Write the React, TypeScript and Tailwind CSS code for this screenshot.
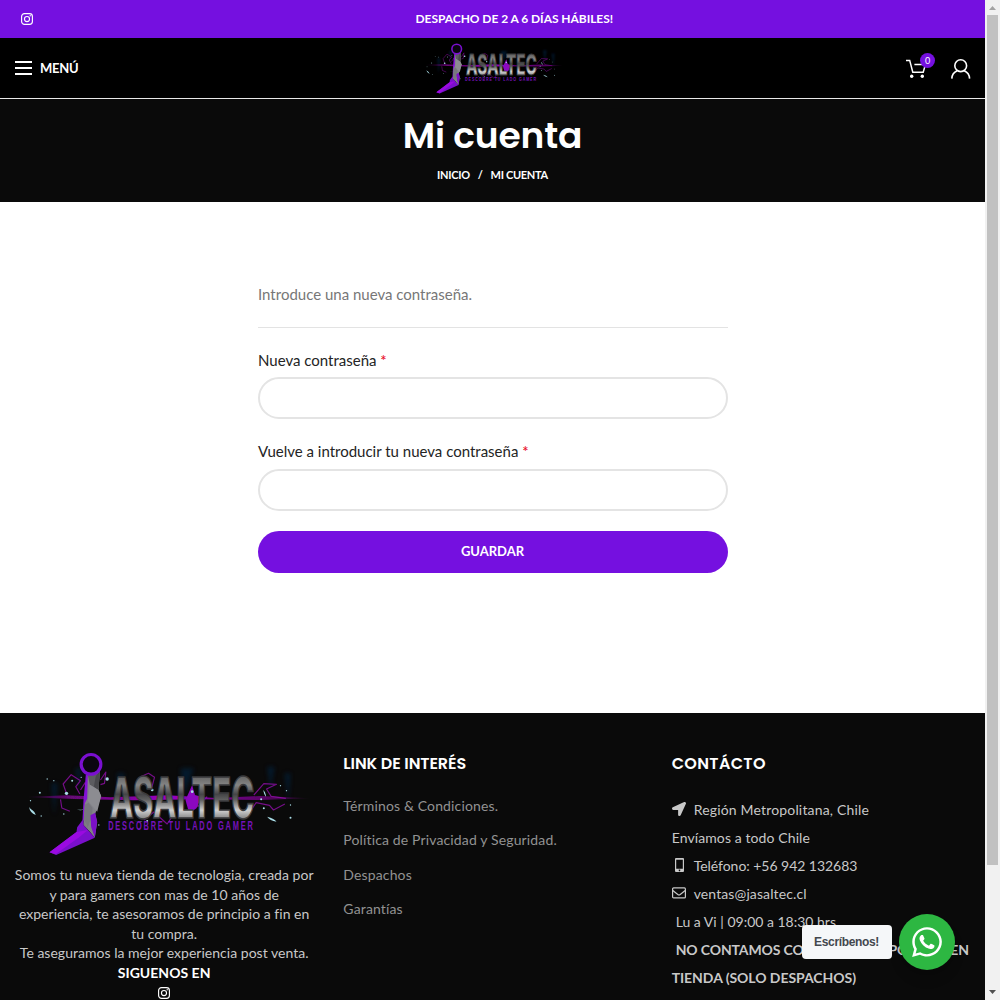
import React from 'react';
import { FaWhatsapp, FaLocationArrow } from 'react-icons/fa';

const SPARKS: [number, number, number][] = [
  [198, 160, 5], [320, 117, 5], [140, 117, 2], [118, 158, 3], [160, 122, 2], [215, 122, 3], [90, 182, 2],
  [122, 228, 2], [190, 222, 2], [295, 255, 2], [870, 233, 3], [858, 152, 2], [870, 195, 2], [790, 205, 3],
  [840, 137, 2], [455, 150, 4], [440, 243, 3], [575, 155, 4], [782, 178, 3], [242, 112, 2],
];

function Logo({ id, className }: { id: string; className: string }) {
  return (
    <svg viewBox="43.5 36 894 312" className={className} aria-label="Jasaltec">
      <defs>
        <linearGradient id={id + 'l'} gradientUnits="userSpaceOnUse" x1="0" y1="-124" x2="0" y2="2">
          <stop offset="0" stopColor="#666" />
          <stop offset="0.2" stopColor="#858585" />
          <stop offset="0.42" stopColor="#454547" />
          <stop offset="0.55" stopColor="#606060" />
          <stop offset="0.8" stopColor="#d0d0d0" />
          <stop offset="1" stopColor="#858585" />
        </linearGradient>
        <linearGradient id={id + 'b'} x1="0" x2="1">
          <stop offset="0" stopColor="#a100b8" stopOpacity="0" />
          <stop offset="0.15" stopColor="#8a0a9e" stopOpacity="0.7" />
          <stop offset="0.5" stopColor="#9a00c4" />
          <stop offset="0.85" stopColor="#8a0a9e" stopOpacity="0.6" />
          <stop offset="1" stopColor="#a100b8" stopOpacity="0" />
        </linearGradient>
        <filter id={id + 'g'} x="-20%" y="-50%" width="140%" height="200%">
          <feGaussianBlur stdDeviation="6" />
        </filter>
        <filter id={id + 's'} x="-20%" y="-50%" width="140%" height="200%">
          <feGaussianBlur stdDeviation="2" />
        </filter>
      </defs>
      <g filter={`url(#${id}g)`} fill="#04264a" opacity="0.55">
        <path d="M153 130l8 95 10-95zM225 85l10 70 8-70zM260 90l10 90 14-90zM800 80l10 70 12-70zM852 100l12 85 6-85zM350 100l10 90 12-90zM540 85l10 80 30-80z" />
      </g>
      <path d="M75 171L200 166 330 172 500 166 650 174 780 168 930 175 780 180 600 178 400 181 220 177z" fill={`url(#${id}b)`} filter={`url(#${id}s)`} />
      <g fill="none" stroke="#980fb2" strokeWidth="3.500" strokeLinejoin="round" opacity="0.75">
        <path d="M200 166l-12-34 24-28 28 18-14 18 12 22M180 178l4 26 24 10M300 120l16-24-4 34-12 4M240 150l14-22 8 42M420 110l24-10 18 12-8 30M430 240l30-24 40 36 20-30M560 190l20-30 12 40 28-30M760 165l30-34 38 2-30 14 14 22 44 6M745 220l22-32 40 8 12 14 34-18" />
      </g>
      <path d="M555 180l20-45 8 30 20 5-15 35-22 15z" fill="#8b08c0" />
      <g fill="#a9dce6">
        {SPARKS.map(([x, y, r]) => (
          <circle key={x + '-' + y} cx={x} cy={y} r={r} />
        ))}
        <path d="M86 201q2 18 20 24-4-10-10-14-5-2-10-10zM800 230q8 12 28 15-6-9-28-15zM788 150q2 12 8 20 2-12-8-20zM228 208q14 4 22-2-6 8-22 2zM398 240q12 8 28 4-8 6-28-4z" />
      </g>
      <path d="M256 104L249 180 246 240 262 250 272 105z" fill="#8412d6" />
      <path d="M262 106L298 94 294 150 302 168 284 222 290 246 283 292 249 254 253 190 260 176z" fill="#838389" />
      <path d="M262 106L298 94 294 150 268 134z" fill="#5c5c60" />
      <path d="M286 108L298 94 294 150 280 140z" fill="#48484c" />
      <path d="M268 134L294 150 302 168 290 215 262 182z" fill="#8c8c91" />
      <path d="M264 188l12 16-2 40-12 24-13-14 4-60z" fill="#77777d" />
      <path d="M270 226l14-8 6 28-7 47-11-28z" fill="#7c10c8" />
      <path d="M249 236L230 262 228 276 147 337 167 345 283 293 249 255z" fill="#7a0fcb" />
      <path d="M262 270L228 276 147 337 165 343 236 292z" fill="#9a0ae0" />
      <path d="M249 236L253 252 283 293 272 262 270 240 262 262z" fill="#808086" />
      <circle cx="271.500" cy="73" r="29.500" fill="#0a0510" stroke="#7a0fd0" strokeWidth="9.500" />
      <g transform="translate(328 234) scale(.605 1)">
        <text textLength="716" lengthAdjust="spacingAndGlyphs" fontFamily="Inter" fontWeight="800" fontSize="171" fill={`url(#${id}l)`} stroke="#3a3a3d" strokeWidth="5">ASALTEC</text>
      </g>
      <g transform="translate(323 271) scale(.6 1)">
        <text textLength="723" lengthAdjust="spacing" fontFamily="Liberation Sans" fontWeight="700" fontSize="37" fill="#7612ba">DESCOBRE TU LADO GAMER</text>
      </g>
    </svg>
  );
}

function Instagram({ className }: { className: string }) {
  return (
    <svg viewBox="0 0 12 12" fill="none" stroke="#fff" className={className}>
      <rect x="0.600" y="0.600" width="10.800" height="10.800" rx="2.900" strokeWidth="1.150" />
      <circle cx="6" cy="6" r="2.550" strokeWidth="1.150" />
      <circle cx="9.200" cy="2.800" r="0.700" fill="#fff" stroke="none" />
    </svg>
  );
}

function Field({ label }: { label: string }) {
  return (
    <label className="mb-5 block text-[15px] leading-[24.500px] text-[#242424]">
      <span className="mb-[4.800px] block pl-[0.500px]">
        {label} <span className="font-medium text-[#e8102a]">*</span>
      </span>
      <input type="password" className="block h-[42px] w-full rounded-full border-2 border-[#e4e4e4] bg-white px-4 outline-none" />
    </label>
  );
}

const HEADING = "font-['Poppins','Inter','sans-serif'] font-semibold text-white";

export default function App() {
  return (
    <div className="flex h-[1000px] w-[1000px] overflow-hidden bg-white font-['Lato','sans-serif']">
      <div className="relative flex w-[985px] flex-col overflow-hidden">
        <div className="grid h-[38px] shrink-0 grid-cols-[1fr_auto_1fr] items-center bg-[#7510e0] pl-[21px]">
          <Instagram className="size-3" />
          <p className="w-[175px] whitespace-nowrap text-[12px] font-bold tracking-[-0.050px] text-white">DESPACHO DE 2 A 6 DÍAS HÁBILES!</p>
        </div>

        <header className="grid h-[61px] shrink-0 grid-cols-3 items-center border-b border-[#e9e9e9] bg-black px-[15px]">
          <div className="flex items-center">
            <div className="-mt-px flex w-[17px] flex-col gap-1">
              <span className="h-0.5 bg-white" />
              <span className="h-0.5 bg-white" />
              <span className="h-0.5 bg-white" />
            </div>
            <span className="ml-2 mt-px text-[13px] font-bold tracking-[-0.300px] text-white">MENÚ</span>
          </div>
          <Logo id="top" className="h-[51px] w-[147px] justify-self-center" />
          <div className="flex items-center justify-end gap-[25px] pt-[1px]">
            <div className="relative left-px">
              <svg viewBox="0 0 20 20" className="size-5" fill="none" stroke="#fff" strokeWidth="1.500">
                <path d="M0 1.400h3.700l3.100 11.900h10.400L19.400 5.600H8.400" />
                <circle cx="5.700" cy="17.300" r="1.700" fill="#fff" stroke="none" />
                <circle cx="16.300" cy="17.300" r="1.700" fill="#fff" stroke="none" />
              </svg>
              <span className="absolute -top-[6px] left-[14px] flex size-[15px] items-center justify-center rounded-full bg-[#7510e0] text-[9px] leading-none text-white">0</span>
            </div>
            <svg viewBox="0 0 20 20" className="relative left-px size-5" fill="none" stroke="#fff" strokeWidth="1.600">
              <circle cx="9.700" cy="6.700" r="5.900" />
              <path d="M.8 19.600a9 9 0 0 1 5.400-7.800M18.600 19.600a9 9 0 0 0-5.400-7.800" />
            </svg>
          </div>
        </header>

        <section className="flex h-[103px] shrink-0 flex-col items-center bg-[#0a0a0a] pt-[15px]">
          <h1 className={HEADING + ' text-[36px] leading-[43px] tracking-[-0.150px]'}>Mi cuenta</h1>
          <nav className="mt-[9px] flex gap-2 text-[11px] font-bold leading-[18px] tracking-[-0.300px] text-white">
            <span>INICIO</span>
            <span>/</span>
            <span>MI CUENTA</span>
          </nav>
        </section>

        <main className="flex h-[511px] shrink-0 justify-center pt-[80px]">
          <form className="w-[470px] text-[15px]">
            <p className="mb-5 border-b border-[#e3e3e3] pb-5 pl-[0.500px] leading-[25px] text-[#777]">Introduce una nueva contraseña.</p>
            <Field label="Nueva contraseña" />
            <Field label="Vuelve a introducir tu nueva contraseña" />
            <button type="button" className="h-[42px] w-full rounded-full bg-[#7510e0] pt-px text-[13px] font-bold text-white">GUARDAR</button>
          </form>
        </main>

        <footer className="grid flex-1 grid-cols-3 bg-[#0a0a0a] text-[14px] text-[#c8c8c8]">
          <div className="flex flex-col items-center px-[15px] pt-[39px] text-center leading-[19.600px]">
            <Logo id="foot" className="-ml-[1px] h-[104px] w-[298px] shrink-0" />
            <p className="mt-[9px] whitespace-nowrap tracking-[0.020px]">
              Somos tu nueva tienda de tecnologia, creada por<br />
              y para gamers con mas de 10 años de<br />
              experiencia, te asesoramos de principio a fin en<br />
              tu compra.<br />
              Te aseguramos la mejor experiencia post venta.<br />
              <strong className="text-white">SIGUENOS EN</strong>
            </p>
            <Instagram className="mt-[4px] size-3 shrink-0" />
          </div>
          <div className="px-[15px] pt-[40px]">
            <h2 className={HEADING + ' text-[16px] leading-[22px] tracking-[-0.100px]'}>LINK DE INTERÉS</h2>
            <ul className="mt-[21px] flex flex-col gap-[14.400px] leading-5 tracking-[0.140px] text-[#929292]">
              <li>Términos &amp; Condiciones.</li>
              <li>Política de Privacidad y Seguridad.</li>
              <li>Despachos</li>
              <li>Garantías</li>
            </ul>
          </div>
          <div className="px-[15px] pt-[40px]">
            <h2 className={HEADING + ' text-[16px] leading-[22px] tracking-[0.350px]'}>CONTÁCTO</h2>
            <div className="mt-[21px] whitespace-nowrap leading-[28px]">
              <p className="flex items-center tracking-[0.170px]"><FaLocationArrow className="mr-2 size-[14px] -translate-y-px" />Región Metropolitana, Chile</p>
              <p className="tracking-[0.100px]">Envíamos a todo Chile</p>
              <p className="flex items-center tracking-[-0.040px]">
                <svg viewBox="0 0 14 14" className="mr-2 size-[14px] -translate-y-px">
                  <path fillRule="evenodd" fill="#c8c8c8" d="M4 0h7q1 0 1 1v12q0 1-1 1H4q-1 0-1-1V1q0-1 1-1zM4.200 1.700v9h6.600v-9zM7.500 11.500a.8.800 0 1 0 .01 0z" />
                </svg>
                Teléfono: +56 942 132683
              </p>
              <p className="flex items-center tracking-[0.120px]">
                <svg viewBox="0 0 14 14" className="mr-2 size-[14px] -translate-y-px" fill="none" stroke="#c8c8c8" strokeWidth="1.200">
                  <rect x="0.600" y="1.900" width="12.800" height="10" rx="1" />
                  <path d="M.8 4.500l5 3.900q1.200.8 2.400 0l5-3.900" />
                </svg>
                ventas@jasaltec.cl
              </p>
              <p className="pl-1">Lu a Vi | 09:00 a 18:30 hrs</p>
              <p className="pl-1 font-bold tracking-[-0.120px]">NO CONTAMOS CON STOCK DISPONIBLE EN</p>
              <p className="font-bold tracking-[-0.050px]">TIENDA (SOLO DESPACHOS)</p>
            </div>
          </div>
        </footer>

        <div className="absolute bottom-[30px] right-[30px] flex items-center gap-[7px]">
          <span className="flex h-[34px] w-[90px] items-center justify-center rounded bg-[#f5f7f9] pr-px font-['Liberation_Sans','sans-serif'] text-[12px] font-bold tracking-[-0.350px] text-[#43474e]">Escríbenos!</span>
          <span className="flex size-14 items-center justify-center rounded-full bg-[#2db742] text-white shadow-lg">
            <FaWhatsapp className="size-[34px]" />
          </span>
        </div>
      </div>

      <div className="flex w-[15px] flex-col items-center bg-[#f1f1f1]">
        <svg viewBox="0 0 15 15" className="size-[15px]"><path d="M4 10l3.500-4L11 10z" fill="#a3a3a3" /></svg>
        <div className="h-[850px] w-[11px] bg-[#c1c1c1]" />
        <svg viewBox="0 0 15 15" className="mt-auto size-[15px]"><path d="M4 5l3.500 4L11 5z" fill="#505050" /></svg>
      </div>
    </div>
  );
}
